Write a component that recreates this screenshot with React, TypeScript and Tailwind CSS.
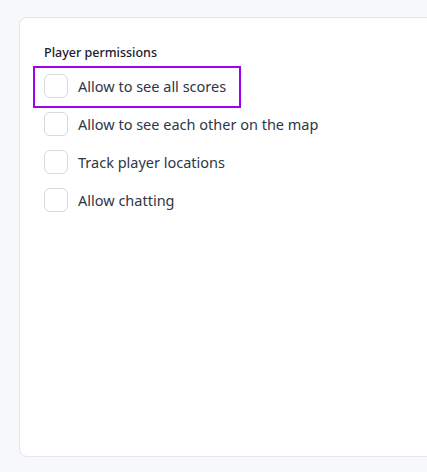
import React from "react";

const items = [
  "Allow to see all scores",
  "Allow to see each other on the map",
  "Track player locations",
  "Allow chatting",
];

export default function App() {
  return (
    <div
      className="w-[427px] h-[472px] overflow-hidden bg-[#f7f8fa] pt-[17px] pl-[19px]"
      style={{ fontFamily: '"Noto Sans", "Open Sans", sans-serif' }}
    >
      <div className="w-[440px] h-[440px] bg-white border border-[#e3e6ec] rounded-[8px] pt-[25px] pl-[24px]">
        <div className="text-[12.5px] leading-[20px] font-medium text-[#1a202c]">
          Player permissions
        </div>
        <div className="mt-[4px] flex flex-col">
          {items.map((t, i) => (
            <label key={t} className="relative h-[38px] flex items-center gap-[10px]">
              {i === 0 && (
                <span className="absolute left-[-11px] top-[-1px] w-[208px] h-[42px] border-2 border-[#a000f0] pointer-events-none" />
              )}
              <span className="w-[24px] h-[24px] rounded-[6px] border border-[#d6d8dd] bg-white shrink-0" />
              <span className="text-[14.5px] text-[#2d3748] leading-[20px]">{t}</span>
            </label>
          ))}
        </div>
      </div>
    </div>
  );
}
